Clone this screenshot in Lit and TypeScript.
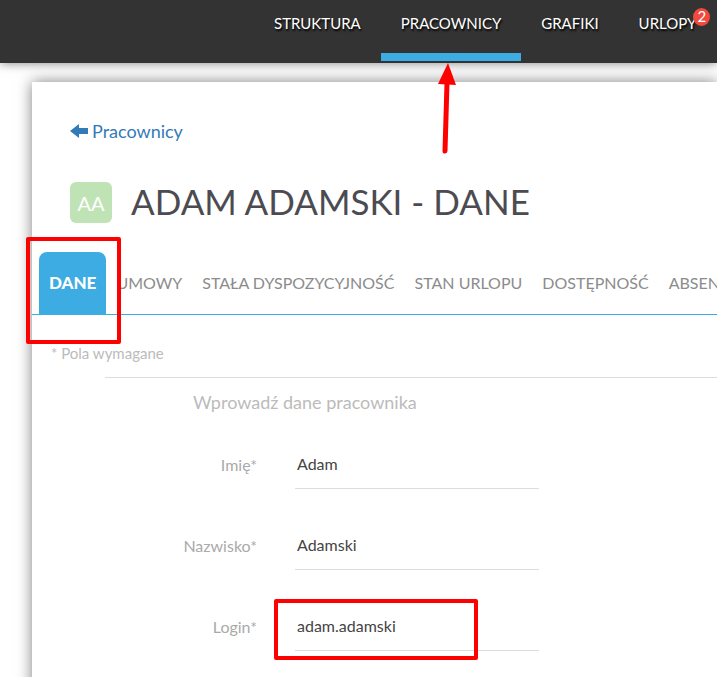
import { LitElement, html, css, nothing } from "lit";
import { customElement } from "lit/decorators.js";
import { classMap } from "lit/directives/class-map.js";

interface NavItem {
  label: string;
  active?: boolean;
  badge?: number;
}

interface Field {
  id: string;
  label: string;
  value: string;
  marked?: boolean;
}

const NAV: NavItem[] = [
  { label: "STRUKTURA" },
  { label: "PRACOWNICY", active: true },
  { label: "GRAFIKI" },
  { label: "URLOPY", badge: 2 },
];

const TABS = ["DANE", "UMOWY", "STAŁA DYSPOZYCYJNOŚĆ", "STAN URLOPU", "DOSTĘPNOŚĆ", "ABSENCJE"];

const FIELDS: Field[] = [
  { id: "imie", label: "Imię*", value: "Adam" },
  { id: "nazwisko", label: "Nazwisko*", value: "Adamski" },
  { id: "login", label: "Login*", value: "adam.adamski", marked: true },
];

@customElement("top-nav")
export class TopNav extends LitElement {
  static styles = css`
    :host {
      display: block;
      position: relative;
      z-index: 1;
      background: #333;
      box-shadow: 0 0 10px rgba(0, 0, 0, 0.5);
    }
    .nav {
      display: flex;
      height: 63px;
      padding-left: 254px;
    }
    .item {
      position: relative;
      display: block;
      flex: none;
      box-sizing: border-box;
      height: 61px;
      padding: 12px 20px 0;
      border-bottom: 8px solid transparent;
      font-size: 15px;
      line-height: 22px;
      color: #fff;
      text-decoration: none;
      text-shadow: 1px 2px 2px #000;
    }
    .item.active {
      border-color: #3dace2;
    }
    .badge {
      position: absolute;
      top: 8px;
      right: 6px;
      width: 17px;
      height: 18px;
      border-radius: 50%;
      background: #f04a3e;
      font-size: 15px;
      line-height: 17px;
      text-align: center;
      text-shadow: none;
    }
    .arrow {
      position: absolute;
      top: 63px;
      left: 55px;
      width: 24px;
      height: 92px;
    }
  `;

  render() {
    return html`
      <nav class="nav">
        ${NAV.map(
          (item) => html`
            <a class=${classMap({ item: true, active: !!item.active })} href="#">
              ${item.label}
              ${item.badge ? html`<span class="badge">${item.badge}</span>` : nothing}
              ${item.active
                ? html`<svg class="arrow" viewBox="0 0 24 92" aria-hidden="true">
                    <path d="M11 20 L9 88" stroke="#f00" stroke-width="5" stroke-linecap="round" />
                    <path d="M12 0 L20 22 L2 21 Z" fill="#f00" />
                  </svg>`
                : nothing}
            </a>
          `,
        )}
      </nav>
    `;
  }
}

@customElement("tab-bar")
export class TabBar extends LitElement {
  static styles = css`
    :host {
      display: block;
      border-bottom: 1px solid #3dace2;
    }
    .tabs {
      display: flex;
      padding-left: 7px;
    }
    .tab {
      position: relative;
      flex: none;
      height: 62px;
      padding: 0 10px;
      border: 0;
      border-radius: 8px 8px 0 0;
      background: none;
      font-family: inherit;
      font-size: 16px;
      font-weight: 400;
      line-height: 62px;
      color: #8c8c8c;
      white-space: nowrap;
    }
    .tab.active {
      background: #3dace2;
      font-size: 17px;
      font-weight: 900;
      color: #fff;
    }
    .mark {
      position: absolute;
      z-index: 1;
      inset: -15px -15px -30px -13px;
      border: 4px solid #f00;
      border-radius: 2px;
    }
  `;

  render() {
    return html`
      <div class="tabs" role="tablist">
        ${TABS.map(
          (tab, i) => html`
            <button
              class=${classMap({ tab: true, active: i === 0 })}
              role="tab"
              aria-selected=${i === 0 ? "true" : "false"}
            >
              ${tab}${i === 0 ? html`<span class="mark"></span>` : nothing}
            </button>
          `,
        )}
      </div>
    `;
  }
}

@customElement("employee-form")
export class EmployeeForm extends LitElement {
  static styles = css`
    :host {
      display: block;
    }
    .required {
      margin: 0;
      padding: 27px 0 13px 19px;
      font-size: 15px;
      line-height: 22px;
      color: #bbb;
    }
    .fieldset {
      margin-left: 73px;
      border-top: 1px solid #ddd;
    }
    .legend {
      margin: 0;
      padding: 12px 0 0 88px;
      font-size: 18px;
      font-weight: 400;
      line-height: 24px;
      color: #bbb;
    }
    .rows {
      display: grid;
      grid-template-columns: 152px 244px;
      column-gap: 38px;
      row-gap: 36px;
      padding-top: 30px;
    }
    .label {
      align-self: center;
      padding-bottom: 3px;
      font-size: 16px;
      font-weight: 400;
      line-height: 24px;
      color: #aaa;
      text-align: right;
    }
    .cell {
      position: relative;
    }
    .input {
      display: block;
      box-sizing: border-box;
      width: 100%;
      height: 45px;
      padding: 0 2px 5px;
      border: 0;
      border-bottom: 1px solid #ddd;
      outline: 0;
      background: none;
      font-family: inherit;
      font-size: 16px;
      color: #444;
    }
    .mark {
      position: absolute;
      inset: -7px 61px -9px -21px;
      border: 4px solid #f00;
      border-radius: 2px;
      pointer-events: none;
    }
  `;

  render() {
    return html`
      <form>
        <p class="required">* Pola wymagane</p>
        <section class="fieldset">
          <h2 class="legend">Wprowadź dane pracownika</h2>
          <div class="rows">
            ${FIELDS.map(
              (f) => html`
                <label class="label" for=${f.id}>${f.label}</label>
                <div class="cell">
                  <input class="input" id=${f.id} type="text" .value=${f.value} />
                  ${f.marked ? html`<span class="mark"></span>` : nothing}
                </div>
              `,
            )}
          </div>
        </section>
      </form>
    `;
  }
}

@customElement("app-root")
export class AppRoot extends LitElement {
  static styles = css`
    :host {
      display: block;
      height: 100vh;
      overflow: hidden;
      background: #fff;
      font-family: Lato, "Liberation Sans", sans-serif;
    }
    .card {
      box-sizing: border-box;
      min-height: 100vh;
      margin: 19px 0 0 32px;
      padding-top: 35px;
      background: #fff;
      box-shadow: 0 0 14px rgba(0, 0, 0, 0.5);
    }
    .back {
      display: inline-flex;
      align-items: center;
      gap: 4px;
      margin-left: 38px;
      font-size: 18px;
      line-height: 28px;
      color: #337ab7;
      text-decoration: none;
    }
    .back-icon {
      width: 18px;
      height: 14px;
    }
    .title {
      display: flex;
      align-items: center;
      gap: 19px;
      height: 42px;
      margin: 36px 0 29px 38px;
    }
    .avatar {
      width: 42px;
      height: 41px;
      border-radius: 6px;
      background: #c0e3b6;
      font-size: 20px;
      line-height: 42px;
      color: #fff;
      text-align: center;
    }
    .name {
      margin: 0;
      padding-bottom: 2px;
      font-size: 35px;
      font-weight: 400;
      line-height: 40px;
      color: #4c4b51;
      white-space: nowrap;
    }
  `;

  render() {
    return html`
      <top-nav></top-nav>
      <main class="card">
        <a class="back" href="#">
          <svg class="back-icon" viewBox="0 0 18 14" aria-hidden="true">
            <path d="M0 7 L9 0 V4 H18 V10 H9 V14 Z" fill="#337ab7" />
          </svg>
          Pracownicy
        </a>
        <header class="title">
          <span class="avatar">AA</span>
          <h1 class="name">ADAM ADAMSKI - DANE</h1>
        </header>
        <tab-bar></tab-bar>
        <employee-form></employee-form>
      </main>
    `;
  }
}
